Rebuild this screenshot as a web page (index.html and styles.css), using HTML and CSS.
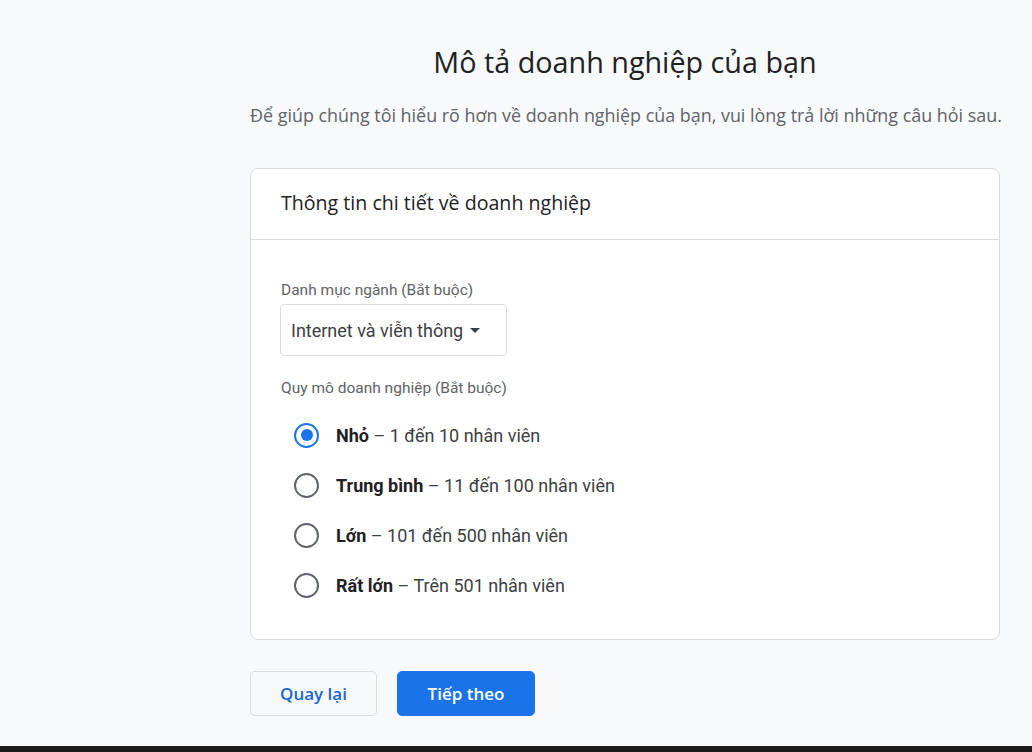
FILE: index.html
```html
<!DOCTYPE html>
<html lang="vi">
<head>
<meta charset="utf-8">
<title>Mô tả doanh nghiệp của bạn</title>
<link rel="stylesheet" href="styles.css">
</head>
<body>
<div class="page">
  <main class="main">
    <h1 class="title">Mô tả doanh nghiệp của bạn</h1>
    <p class="subtitle">Để giúp chúng tôi hiểu rõ hơn về doanh nghiệp của bạn, vui lòng trả lời những câu hỏi sau.</p>
    <section class="card">
      <div class="card-header">Thông tin chi tiết về doanh nghiệp</div>
      <div class="card-body">
        <div class="field-label">Danh mục ngành (Bắt buộc)</div>
        <div class="select">
          <span class="select-text">Internet và viễn thông</span>
          <span class="caret"></span>
        </div>
        <div class="field-label second">Quy mô doanh nghiệp (Bắt buộc)</div>
        <div class="radios">
          <div class="radio-row"><span class="radio checked"></span><span class="radio-label"><b>Nhỏ</b> – 1 đến 10 nhân viên</span></div>
          <div class="radio-row"><span class="radio"></span><span class="radio-label"><b>Trung bình</b> – 11 đến 100 nhân viên</span></div>
          <div class="radio-row"><span class="radio"></span><span class="radio-label"><b>Lớn</b> – 101 đến 500 nhân viên</span></div>
          <div class="radio-row"><span class="radio"></span><span class="radio-label"><b>Rất lớn</b> – Trên 501 nhân viên</span></div>
        </div>
      </div>
    </section>
    <div class="actions">
      <button class="btn btn-outline">Quay lại</button>
      <button class="btn btn-primary">Tiếp theo</button>
    </div>
  </main>
  <div class="bottom-bar"></div>
</div>
</body>
</html>
```
FILE: styles.css
```css
html, body {
  margin: 0;
  padding: 0;
  height: 100%;
}
body {
  background: #f8f9fa;
  font-family: Roboto, "Noto Sans", Arial, sans-serif;
  color: #202124;
  overflow: hidden;
}
.page {
  height: 752px;
  display: flex;
  flex-direction: column;
}
.main {
  flex: 1;
  padding-left: 250px;
  width: 750px;
}
.title {
  margin: 0;
  padding-top: 42px;
  font-family: "Open Sans", "Noto Sans", sans-serif;
  font-weight: 400;
  font-size: 28.75px;
  line-height: 40px;
  text-align: center;
  color: #202124;
}
.subtitle {
  margin: 20px 0 0;
  font-family: "Open Sans", "Noto Sans", sans-serif;
  font-size: 17.9px;
  line-height: 26px;
  text-align: center;
  color: #5f6368;
  white-space: nowrap;
}
.card {
  margin-top: 40px;
  background: #fff;
  border: 1px solid #dadce0;
  border-radius: 8px;
  height: 472px;
  box-sizing: border-box;
}
.card-header {
  height: 71px;
  box-sizing: border-box;
  border-bottom: 1px solid #dadce0;
  padding-left: 30px;
  padding-bottom: 3px;
  display: flex;
  align-items: center;
  font-family: "Open Sans", "Noto Sans", sans-serif;
  font-size: 19.6px;
  color: #202124;
}
.card-body {
  padding: 40px 30px 30px 30px;
}
.field-label {
  font-size: 15.5px;
  line-height: 20px;
  color: #5f6368;
}
.field-label.second {
  margin-top: 22px;
}
.select {
  margin-top: 4px;
  margin-left: -1px;
  width: 227px;
  height: 52px;
  box-sizing: border-box;
  border: 1px solid #dadce0;
  border-radius: 4px;
  display: flex;
  align-items: center;
  padding-left: 10px;
  gap: 7px;
}
.select-text {
  font-size: 18px;
  color: #3c4043;
}
.caret {
  width: 0;
  height: 0;
  border-left: 5px solid transparent;
  border-right: 5px solid transparent;
  border-top: 5px solid #3c4043;
}
.radios {
  margin-top: 12px;
  display: flex;
  flex-direction: column;
}
.radio-row {
  height: 50px;
  display: flex;
  align-items: center;
  padding-left: 13px;
}
.radio {
  width: 25px;
  height: 25px;
  box-sizing: border-box;
  border: 2px solid #5f6368;
  border-radius: 50%;
  display: flex;
  align-items: center;
  justify-content: center;
  flex-shrink: 0;
}
.radio.checked {
  border-color: #1a73e8;
}
.radio.checked::after {
  content: "";
  width: 12px;
  height: 12px;
  border-radius: 50%;
  background: #1a73e8;
}
.radio-label {
  margin-left: 17px;
  font-size: 18px;
  color: #3c4043;
}
.radio-label b {
  font-weight: 700;
  color: #202124;
}
.actions {
  margin-top: 31px;
  display: flex;
  gap: 20px;
}
.btn {
  height: 45px;
  box-sizing: border-box;
  border-radius: 5px;
  font-family: "Open Sans", "Noto Sans", sans-serif;
  font-size: 17px;
  font-weight: 600;
  padding: 0;
  cursor: pointer;
}
.btn-outline {
  width: 127px;
  background: #f8f9fa;
  border: 1px solid #dadce0;
  color: #1967d2;
}
.btn-primary {
  width: 138px;
  background: #1a73e8;
  border: 1px solid #1a73e8;
  color: #fff;
}
.bottom-bar {
  height: 6px;
  background: #1c1c1c;
  flex-shrink: 0;
}
```
